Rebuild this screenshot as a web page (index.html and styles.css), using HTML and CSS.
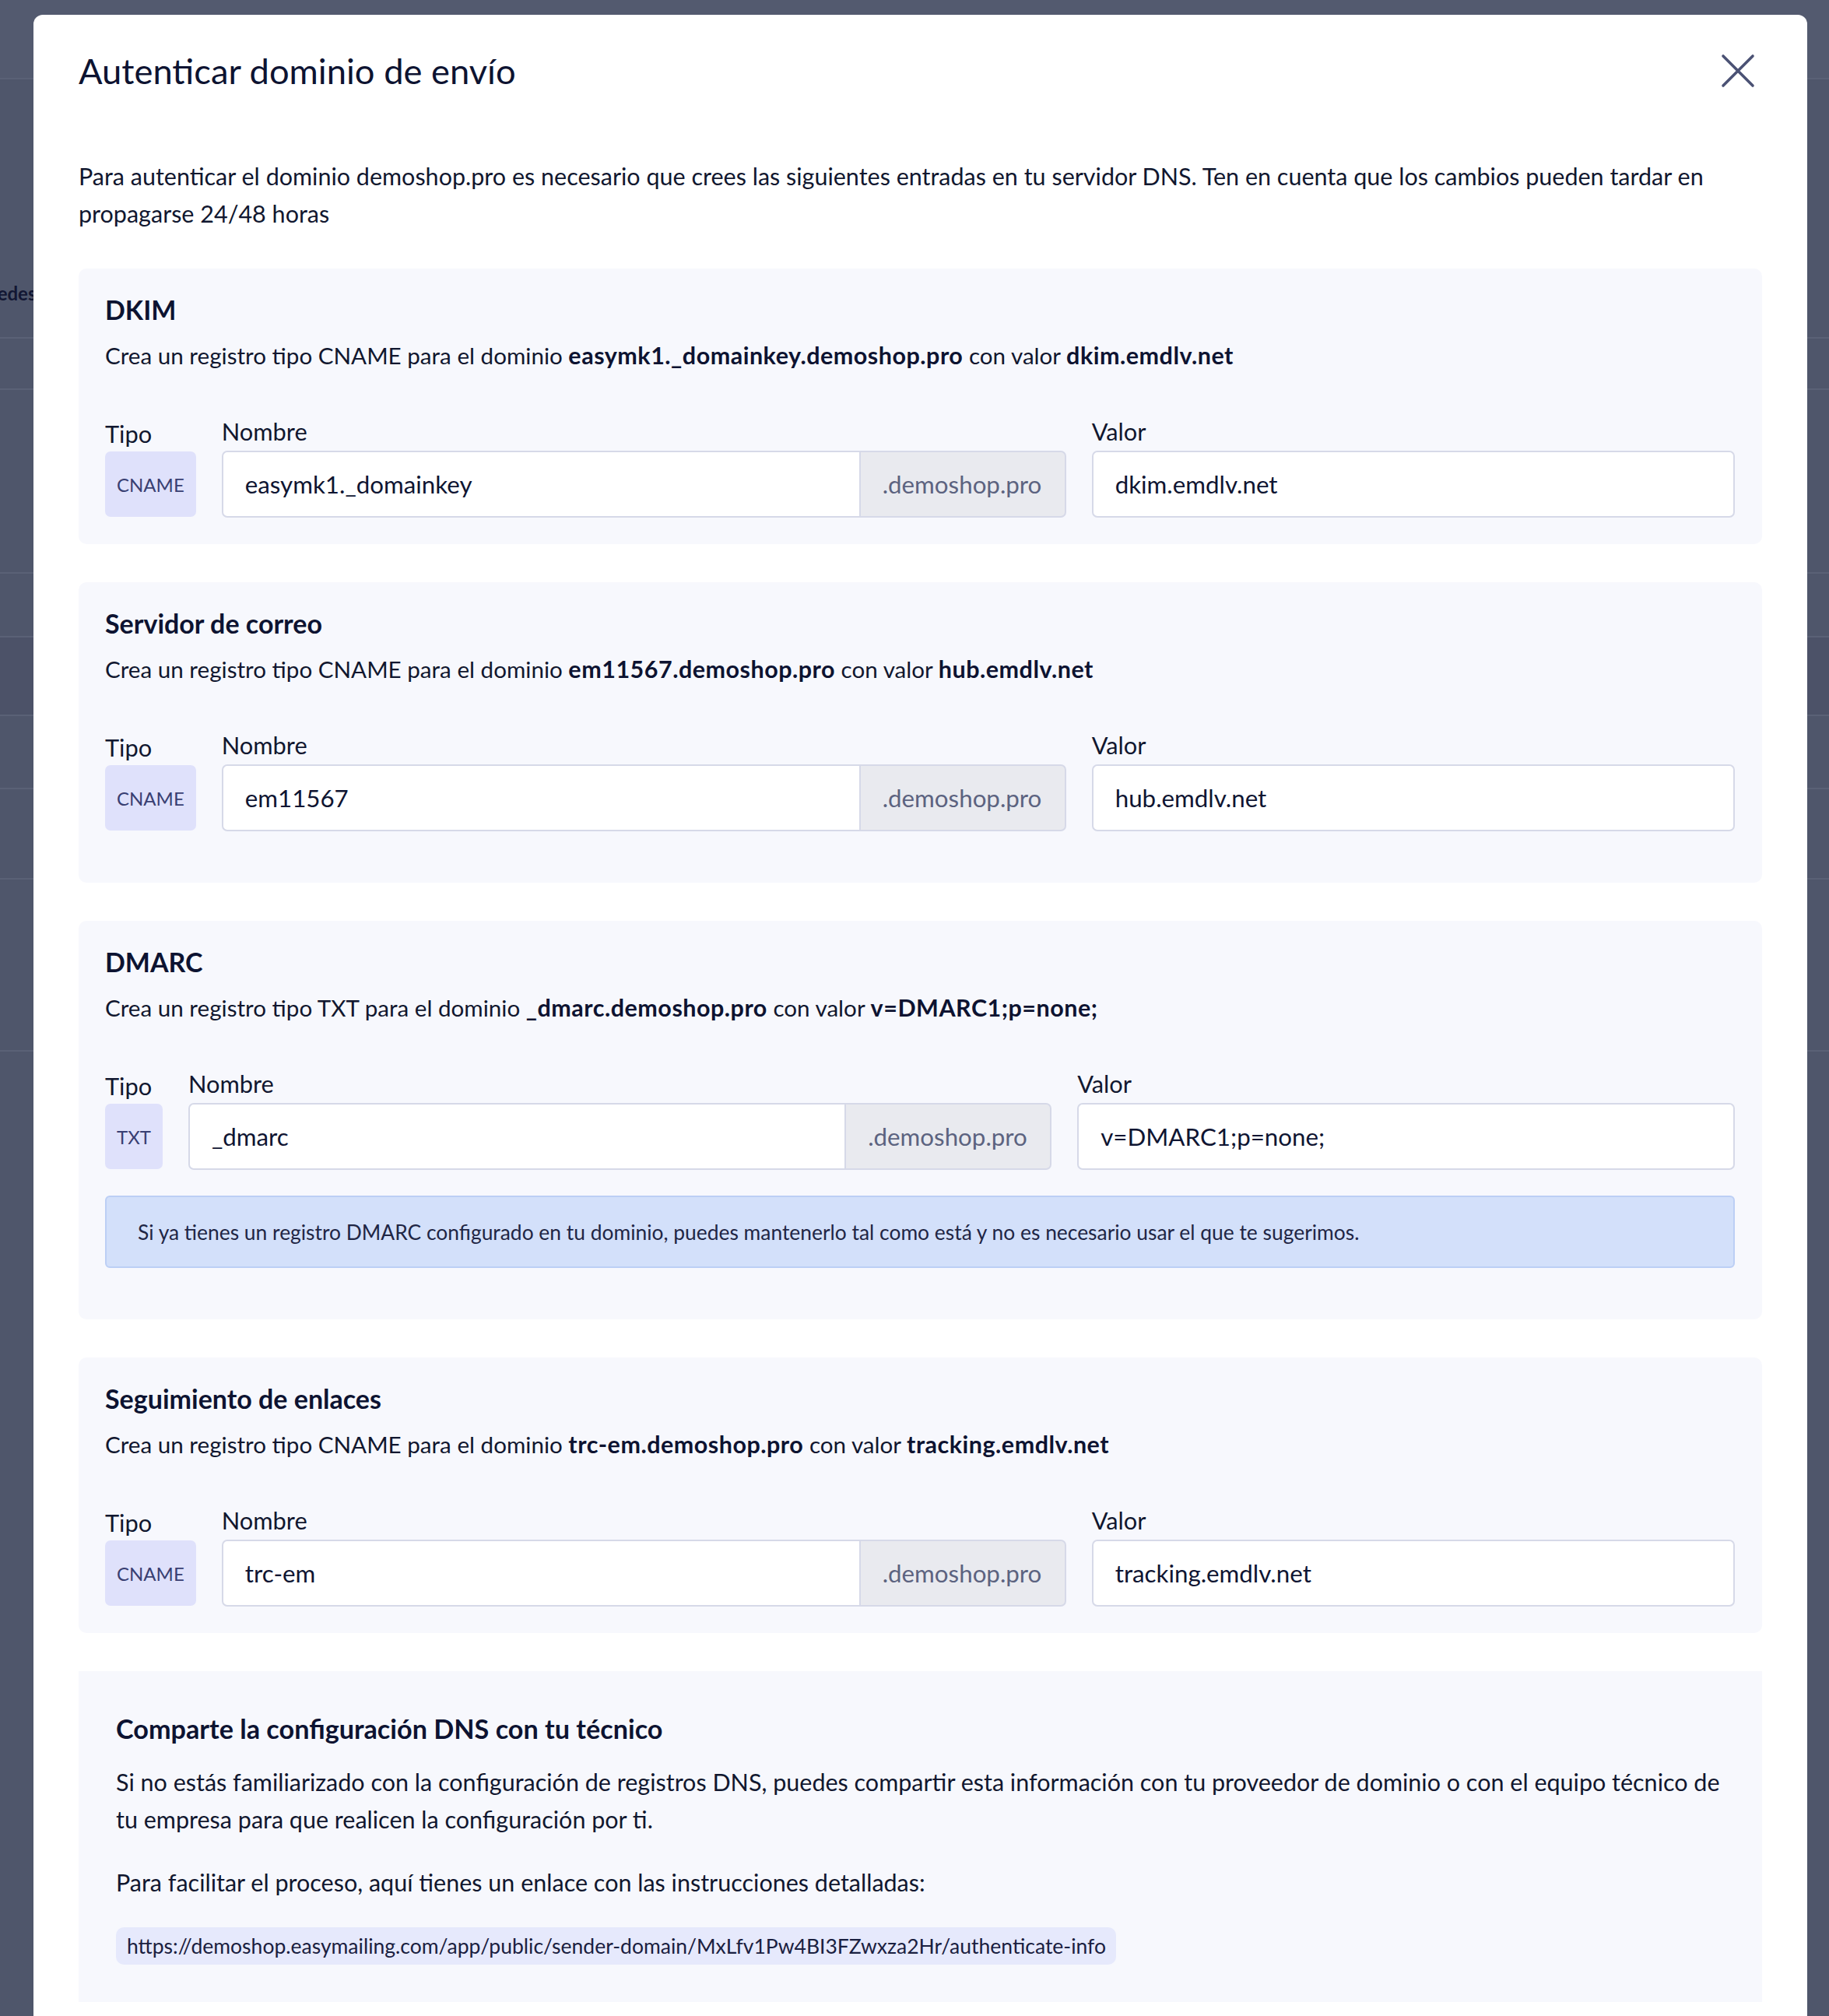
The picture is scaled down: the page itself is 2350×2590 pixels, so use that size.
FILE: index.html
```html
<!DOCTYPE html>
<html lang="es">
<head>
<meta charset="utf-8">
<title>Autenticar dominio de envío</title>
<link rel="stylesheet" href="styles.css">
</head>
<body>
<div class="bg-page">
  <div class="bg-row bg-r1"></div>
  <div class="bg-row bg-r2"><div class="bg-clip"><span class="bg-text">Redes sociales</span></div></div>
  <div class="bg-row bg-r3"></div>
  <div class="bg-row bg-r4"></div>
  <div class="bg-row bg-r5"></div>
  <div class="bg-row bg-r6"></div>
  <div class="bg-row bg-r7"></div>
  <div class="bg-row bg-r8"></div>
  <div class="bg-row bg-r9"></div>
</div>

<div class="modal">
  <div class="modal-header">
    <h1 class="modal-title">Autenticar dominio de envío</h1>
    <button class="close-btn" aria-label="Cerrar">
      <svg viewBox="0 0 44 44" width="44" height="44"><path d="M3 3 L41 41 M41 3 L3 41" stroke="#4b5274" stroke-width="3.6" stroke-linecap="round" fill="none"/></svg>
    </button>
  </div>

  <p class="intro">Para autenticar el dominio demoshop.pro es necesario que crees las siguientes entradas en tu servidor DNS. Ten en cuenta que los cambios pueden tardar en propagarse 24/48 horas</p>

  <div class="cards">
    <section class="card">
      <h2 class="card-title">DKIM</h2>
      <p class="card-desc">Crea un registro tipo CNAME para el dominio <b>easymk1._domainkey.demoshop.pro</b> con valor <b>dkim.emdlv.net</b></p>
      <div class="fields">
        <div class="field">
          <div class="label label-tipo">Tipo</div>
          <div class="badge">CNAME</div>
        </div>
        <div class="field">
          <div class="label">Nombre</div>
          <div class="group">
            <div class="input input-left">easymk1._domainkey</div>
            <div class="suffix">.demoshop.pro</div>
          </div>
        </div>
        <div class="field">
          <div class="label">Valor</div>
          <div class="input">dkim.emdlv.net</div>
        </div>
      </div>
    </section>

    <section class="card card-extra">
      <h2 class="card-title">Servidor de correo</h2>
      <p class="card-desc">Crea un registro tipo CNAME para el dominio <b>em11567.demoshop.pro</b> con valor <b>hub.emdlv.net</b></p>
      <div class="fields">
        <div class="field">
          <div class="label label-tipo">Tipo</div>
          <div class="badge">CNAME</div>
        </div>
        <div class="field">
          <div class="label">Nombre</div>
          <div class="group">
            <div class="input input-left">em11567</div>
            <div class="suffix">.demoshop.pro</div>
          </div>
        </div>
        <div class="field">
          <div class="label">Valor</div>
          <div class="input">hub.emdlv.net</div>
        </div>
      </div>
    </section>

    <section class="card card-extra">
      <h2 class="card-title">DMARC</h2>
      <p class="card-desc">Crea un registro tipo TXT para el dominio <b>_dmarc.demoshop.pro</b> con valor <b>v=DMARC1;p=none;</b></p>
      <div class="fields">
        <div class="field">
          <div class="label label-tipo">Tipo</div>
          <div class="badge">TXT</div>
        </div>
        <div class="field">
          <div class="label">Nombre</div>
          <div class="group">
            <div class="input input-left">_dmarc</div>
            <div class="suffix">.demoshop.pro</div>
          </div>
        </div>
        <div class="field">
          <div class="label">Valor</div>
          <div class="input">v=DMARC1;p=none;</div>
        </div>
      </div>
      <div class="alert">Si ya tienes un registro DMARC configurado en tu dominio, puedes mantenerlo tal como está y no es necesario usar el que te sugerimos.</div>
    </section>

    <section class="card">
      <h2 class="card-title">Seguimiento de enlaces</h2>
      <p class="card-desc">Crea un registro tipo CNAME para el dominio <b>trc-em.demoshop.pro</b> con valor <b>tracking.emdlv.net</b></p>
      <div class="fields">
        <div class="field">
          <div class="label label-tipo">Tipo</div>
          <div class="badge">CNAME</div>
        </div>
        <div class="field">
          <div class="label">Nombre</div>
          <div class="group">
            <div class="input input-left">trc-em</div>
            <div class="suffix">.demoshop.pro</div>
          </div>
        </div>
        <div class="field">
          <div class="label">Valor</div>
          <div class="input">tracking.emdlv.net</div>
        </div>
      </div>
    </section>

    <section class="share">
      <h3 class="share-title">Comparte la configuración DNS con tu técnico</h3>
      <p class="share-text">Si no estás familiarizado con la configuración de registros DNS, puedes compartir esta información con tu proveedor de dominio o con el equipo técnico de tu empresa para que realicen la configuración por ti.</p>
      <p class="share-text share-text2">Para facilitar el proceso, aquí tienes un enlace con las instrucciones detalladas:</p>
      <div class="url-pill">https://demoshop.easymailing.com/app/public/sender-domain/MxLfv1Pw4BI3FZwxza2Hr/authenticate-info</div>
    </section>
  </div>
</div>
</body>
</html>
```

FILE: styles.css
```css
html, body {
  margin: 0;
  padding: 0;
}
body {
  width: 2350px;
  height: 2590px;
  overflow: hidden;
  background: #4f566b;
  font-family: Lato, "Noto Sans", "Liberation Sans", sans-serif;
  color: #0f1532;
  position: relative;
}

/* background application (behind overlay) */
.bg-page {
  width: 100%;
}
.bg-row {
  border-bottom: 2px solid #5a6176;
  box-sizing: border-box;
}
.bg-r1 { height: 102px; background: #535a6f; }
.bg-r2 { height: 333px; padding-top: 258px; }
.bg-r3 { height: 66px; }
.bg-r4 { height: 236px; }
.bg-r5 { height: 82px; }
.bg-r6 { height: 101px; background: #4c5268; }
.bg-r7 { height: 94px; }
.bg-r8 { height: 116px; }
.bg-r9 { height: 221px; }
.bg-clip {
  width: 43px;
  overflow: hidden;
}
.bg-text {
  display: block;
  margin-left: -18px;
  font-size: 24px;
  line-height: 34px;
  font-weight: 700;
  color: #121733;
  white-space: nowrap;
}

/* modal */
.modal {
  position: absolute;
  left: 43px;
  top: 19px;
  width: 2279px;
  height: 2700px;
  box-sizing: border-box;
  background: #ffffff;
  border-radius: 12px 12px 0 0;
  padding: 44px 58px 0 58px;
}
.modal-header {
  display: flex;
  align-items: center;
  justify-content: space-between;
  height: 56px;
}
.modal-title {
  margin: 0;
  font-size: 45.3px;
  font-weight: 400;
  line-height: 56px;
  color: #0d1331;
}
.close-btn {
  border: 0;
  background: transparent;
  padding: 0;
  margin-right: 9px;
  width: 44px;
  height: 44px;
  display: flex;
}
.intro {
  margin: 83px 0 47px 0;
  font-size: 30.5px;
  line-height: 48px;
  color: #11172f;
}

.cards {
  display: flex;
  flex-direction: column;
  gap: 49px;
}
.card {
  background: #f7f8fd;
  border-radius: 10px;
  padding: 33px 35px 34px 34px;
}
.card-extra {
  padding-bottom: 66px;
}
.card-title {
  margin: 0;
  font-size: 34px;
  line-height: 40px;
  font-weight: 700;
  color: #0d1331;
}
.card-desc {
  margin: 15px 0 0 0;
  font-size: 29.6px;
  line-height: 48px;
  color: #11172f;
}
.card-desc b {
  font-weight: 700;
  font-size: 30.5px;
  line-height: 1;
  letter-spacing: 0.5px;
  color: #0d1331;
}

.fields {
  margin-top: 54px;
  display: grid;
  grid-template-columns: auto 1.313fr 1fr;
  column-gap: 33px;
}
.field {
  display: flex;
  flex-direction: column;
  min-width: 0;
}
.label {
  font-size: 30.8px;
  line-height: 40px;
  height: 40px;
  margin-bottom: 4px;
  color: #11172f;
}
.label-tipo {
  padding-top: 3px;
  box-sizing: border-box;
}
.badge {
  height: 84px;
  box-sizing: border-box;
  margin-top: 1px;
  padding: 0 15px;
  display: flex;
  align-items: center;
  justify-content: center;
  background: #dfe1fb;
  border-radius: 7px;
  font-size: 24px;
  color: #393f72;
}
.group {
  display: flex;
}
.input {
  height: 86px;
  box-sizing: border-box;
  border: 2px solid #d6d9e8;
  border-radius: 7px;
  background: #ffffff;
  padding: 0 28px;
  display: flex;
  align-items: center;
  font-size: 31.3px;
  color: #0f1532;
  white-space: nowrap;
}
.input-left {
  flex: 1;
  border-radius: 7px 0 0 7px;
  min-width: 0;
}
.suffix {
  width: 264px;
  height: 86px;
  box-sizing: border-box;
  border: 2px solid #d6d9e8;
  border-left: 0;
  border-radius: 0 7px 7px 0;
  background: #e9eaef;
  padding-left: 28px;
  display: flex;
  align-items: center;
  font-size: 31.3px;
  color: #5c6380;
  white-space: nowrap;
}

.alert {
  margin-top: 33px;
  height: 93px;
  box-sizing: border-box;
  background: #d3e0fa;
  border: 2px solid #bccff5;
  border-radius: 6px;
  padding-left: 40px;
  display: flex;
  align-items: center;
  font-size: 26.4px;
  color: #1f2645;
}

.share {
  background: #f7f8fd;
  padding: 52px 48px 48px 48px;
}
.share-title {
  margin: 0;
  font-size: 34.2px;
  line-height: 44px;
  font-weight: 700;
  color: #0d1331;
}
.share-text {
  margin: 22px 0 0 0;
  font-size: 30.5px;
  line-height: 48px;
  color: #11172f;
}
.share-text2 {
  margin-top: 33px;
}
.url-pill {
  display: inline-block;
  margin-top: 34px;
  height: 48px;
  line-height: 48px;
  padding: 0 13px 0 14px;
  background: #e6e9fc;
  border-radius: 10px;
  font-size: 26.5px;
  color: #1a2040;
  white-space: nowrap;
}
```
